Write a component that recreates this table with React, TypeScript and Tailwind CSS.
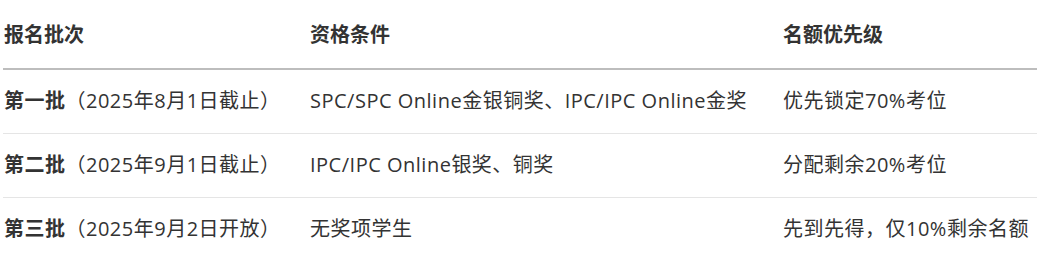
const rows = [
  {
    batch: "第一批",
    date: "（2025年8月1日截止）",
    cond: "SPC/SPC Online金银铜奖、IPC/IPC Online金奖",
    quota: "优先锁定70%考位",
  },
  {
    batch: "第二批",
    date: "（2025年9月1日截止）",
    cond: "IPC/IPC Online银奖、铜奖",
    quota: "分配剩余20%考位",
  },
  {
    batch: "第三批",
    date: "（2025年9月2日开放）",
    cond: "无奖项学生",
    quota: "先到先得，仅10%剩余名额",
  },
];

export default function App() {
  return (
    <div
      className="h-[260px] w-[1044px] overflow-hidden bg-white pl-[3px] text-[#333333]"
      style={{ fontFamily: '"Open Sans", "Noto Sans CJK SC", sans-serif' }}
    >
      <table className="w-[1034px] border-collapse text-left text-[20px] tracking-[0.5px]">
        <colgroup>
          <col className="w-[307px]" />
          <col className="w-[473px]" />
          <col />
        </colgroup>
        <thead>
          <tr className="h-[69px] border-b-2 border-[#bdbdbd]">
            <th className="pl-px pt-[2px] font-bold tracking-normal">报名批次</th>
            <th className="pl-0 pt-[2px] font-bold tracking-normal">资格条件</th>
            <th className="pl-0 pt-[2px] font-bold tracking-normal">名额优先级</th>
          </tr>
        </thead>
        <tbody>
          {rows.map((r) => (
            <tr key={r.batch} className="h-[64px] border-b border-[#e5e5e5]">
              <td className="pl-px">
                <span className="font-bold">{r.batch}</span>
                {r.date}
              </td>
              <td>{r.cond}</td>
              <td>{r.quota}</td>
            </tr>
          ))}
        </tbody>
      </table>
    </div>
  );
}
